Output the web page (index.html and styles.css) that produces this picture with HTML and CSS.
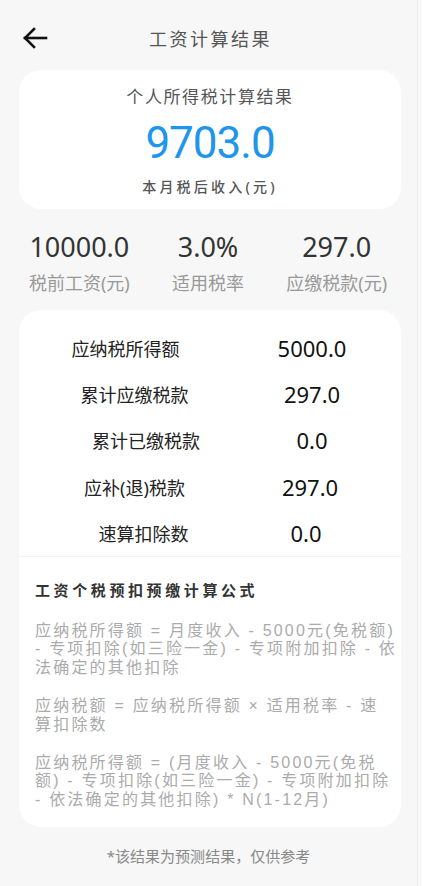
FILE: index.html
```html
<!DOCTYPE html>
<html lang="zh-CN">
<head>
  <meta charset="UTF-8">
  <meta name="viewport" content="width=device-width, initial-scale=1.0">
  <title>工资计算结果</title>
  <link rel="stylesheet" href="styles.css">
</head>
<body>
  <div class="app">

    <!-- Top bar -->
    <div class="topbar">
      <a class="back" href="#">
        <svg width="26" height="24" viewBox="0 0 26 24" fill="none" stroke="#111" stroke-width="2.6" stroke-linecap="square">
          <path d="M24 12H3"/>
          <path d="M12 3L3 12l9 9"/>
        </svg>
      </a>
      <h1>工资计算结果</h1>
      <span></span>
    </div>

    <!-- Result card -->
    <div class="card result">
      <div class="result-title">个人所得税计算结果</div>
      <div class="result-amount">9703.0</div>
      <div class="result-label">本月税后收入(元)</div>
    </div>

    <!-- Summary -->
    <div class="summary">
      <div class="stat">
        <div class="stat-value">10000.0</div>
        <div class="stat-label">税前工资(元)</div>
      </div>
      <div class="stat">
        <div class="stat-value">3.0%</div>
        <div class="stat-label">适用税率</div>
      </div>
      <div class="stat">
        <div class="stat-value">297.0</div>
        <div class="stat-label">应缴税款(元)</div>
      </div>
    </div>

    <!-- Details + formula -->
    <div class="card details">
      <div class="rows">
        <div class="row">
          <span class="row-label">应纳税所得额</span>
          <span class="row-value">5000.0</span>
        </div>
        <div class="row row-b">
          <span class="row-label">累计应缴税款</span>
          <span class="row-value">297.0</span>
        </div>
        <div class="row row-c">
          <span class="row-label">累计已缴税款</span>
          <span class="row-value">0.0</span>
        </div>
        <div class="row row-d">
          <span class="row-label">应补(退)税款</span>
          <span class="row-value">297.0</span>
        </div>
        <div class="row row-e">
          <span class="row-label">速算扣除数</span>
          <span class="row-value">0.0</span>
        </div>
      </div>

      <div class="formula">
        <h2>工资个税预扣预缴计算公式</h2>
        <p>
          <span>应纳税所得额 = 月度收入 - 5000元(免税额)</span>
          <span>- 专项扣除(如三险一金) - 专项附加扣除 - 依</span>
          <span>法确定的其他扣除</span>
        </p>
        <p>
          <span>应纳税额 = 应纳税所得额 × 适用税率 - 速</span>
          <span>算扣除数</span>
        </p>
        <p>
          <span>应纳税所得额 = (月度收入 - 5000元(免税</span>
          <span>额) - 专项扣除(如三险一金) - 专项附加扣除</span>
          <span>- 依法确定的其他扣除) * N(1-12月)</span>
        </p>
      </div>
    </div>

    <div class="note">*该结果为预测结果，仅供参考</div>
  </div>
</body>
</html>
```

FILE: styles.css
```css
/* Basic styling */
body {
  margin: 0;
  background-color: #f7f7f7;
  font-family: "Noto Sans", "Noto Sans CJK SC", sans-serif;
  color: #333;
}
.app {
  width: 417px;
  min-height: 100vh;
  border-right: 1px solid #ececec;
}

/* Top bar */
.topbar {
  display: grid;
  grid-template-columns: 1fr auto 1fr;
  align-items: center;
  height: 56px;
  padding: 10px 0 4px;
}
.back {
  display: flex;
  padding-left: 22px;
}
.topbar h1 {
  margin: 0;
  font-size: 18px;
  font-weight: 400;
  letter-spacing: 2.5px;
  color: #555;
  transform: translateX(2px);
}

/* Cards */
.card {
  background-color: #ffffff;
  border-radius: 22px;
  margin: 0 16px 0 19px;
}
.result {
  padding: 15px 0 12px;
  text-align: center;
}
.result-title {
  font-size: 17px;
  line-height: 24px;
  letter-spacing: 1.6px;
  color: #555;
}
.result-amount {
  margin-top: 9px;
  font-family: Roboto, "Noto Sans", sans-serif;
  font-size: 44px;
  line-height: 50px;
  letter-spacing: -1px;
  color: #1e96ec;
}
.result-label {
  margin-top: 9px;
  font-size: 14px;
  line-height: 20px;
  font-weight: 500;
  letter-spacing: 3.2px;
  color: #555;
}

/* Summary row */
.summary {
  display: grid;
  grid-template-columns: repeat(3, 1fr);
  margin: 20px 16px 15px 15px;
  text-align: center;
}
.stat-value {
  font-size: 27px;
  line-height: 36px;
  color: #333;
}
.stat-label {
  margin-top: 6px;
  font-size: 18px;
  line-height: 24px;
  color: #999;
}

/* Detail rows */
.details {
  padding-top: 15px;
}
.rows {
  border-bottom: 1px solid #f3f3f3;
}
.row {
  display: grid;
  grid-template-columns: 213px 160px;
  align-items: center;
  height: 46.2px;
}
.row-label {
  text-align: center;
  font-size: 18px;
  color: #222;
}
.row-value {
  text-align: center;
  font-size: 22px;
  color: #111;
}
.row-b .row-label { padding-left: 18px; }
.row-c .row-label { padding-left: 41px; }
.row-d .row-label { padding-left: 18px; }
.row-e .row-label { padding-left: 36px; }
.row-d .row-value { padding-right: 4px; }
.row-e .row-value { padding-right: 12px; }

/* Formula */
.formula {
  padding: 22px 16px 18px;
}
.formula h2 {
  margin: 0;
  font-size: 15px;
  line-height: 22px;
  font-weight: 700;
  letter-spacing: 3.6px;
  color: #333;
}
.formula p {
  margin: 20px 0 0;
  font-family: "Liberation Sans", "Noto Sans CJK SC", sans-serif;
  font-size: 16px;
  line-height: 18.4px;
  letter-spacing: 2.2px;
  color: #ababab;
}
.formula h2 + p {
  margin-top: 21px;
}
.formula p span {
  display: block;
  white-space: nowrap;
}

/* Footnote */
.note {
  margin-top: 18px;
  text-align: center;
  font-size: 15px;
  line-height: 22px;
  color: #888;
}
```
